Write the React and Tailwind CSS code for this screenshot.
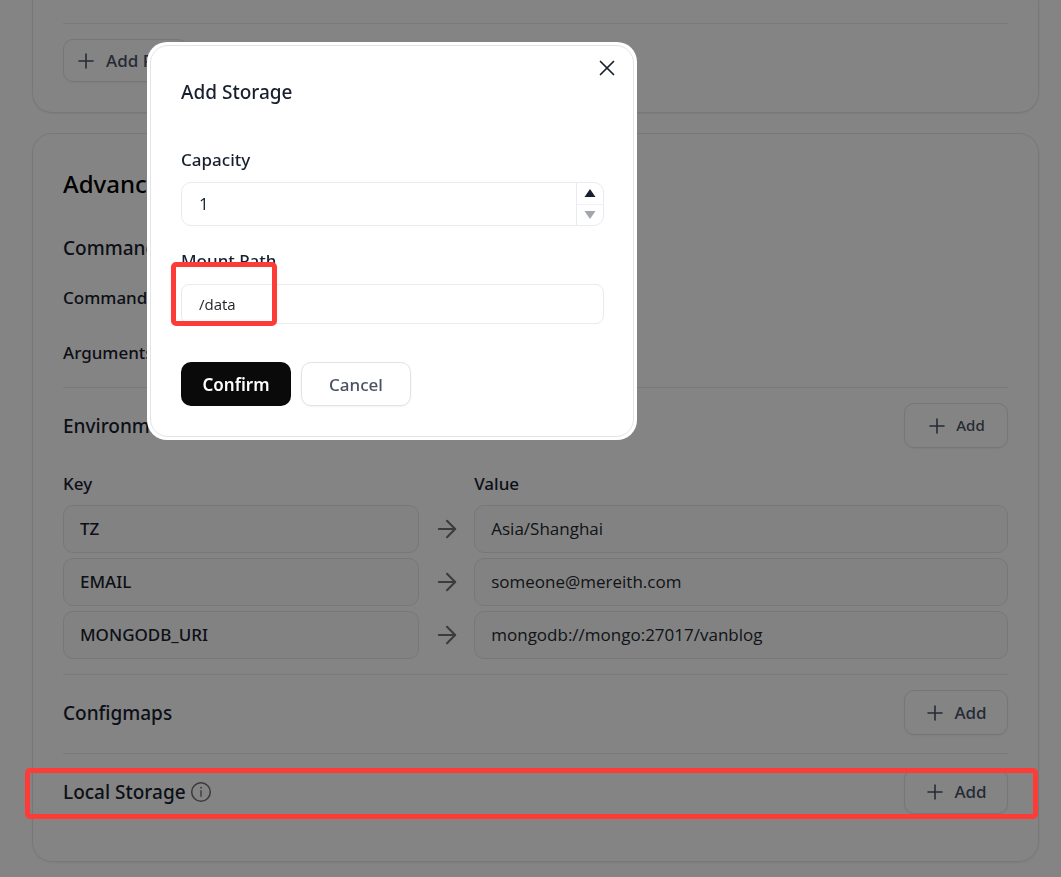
import React, { useState } from 'react';
import { ArrowRight, Plus, X } from 'lucide-react';

const ENVS = [
    { key: 'TZ', value: 'Asia/Shanghai' },
    { key: 'EMAIL', value: 'someone@mereith.com' },
    { key: 'MONGODB_URI', value: 'mongodb://mongo:27017/vanblog' },
];

function InfoIcon() {
    return (
        <svg width="22" height="22" viewBox="0 0 22 22" fill="none" stroke="currentColor">
            <circle cx="11" cy="11" r="9.3" strokeWidth="1.5" />
            <path d="M11 9.2v6.6" strokeWidth="1.4" />
            <circle cx="11" cy="6.7" r="0.9" fill="currentColor" stroke="none" />
        </svg>
    );
}

function AddButton({ small }) {
    return (
        <button
            type="button"
            className="flex h-[45px] w-[104px] items-center justify-center gap-[7px] rounded-[10px] border border-[#dfe2ea] pr-[2px] font-medium text-[#485264] shadow-xs"
        >
            <Plus size={24} strokeWidth={1.6} />
            <span className={small ? 'text-[15px]' : 'text-[17px]'}>Add</span>
        </button>
    );
}

function SectionTitle({ children }) {
    return <h3 className="text-[19px] leading-7 font-medium text-[#18202f]">{children}</h3>;
}

function EnvTable() {
    return (
        <table className="mt-[22px] w-full table-fixed border-separate border-spacing-0 text-left text-[17px] text-[#24282c]">
            <thead>
                <tr className="text-[#18202f]">
                    <th className="w-[37.7%] pb-[7px] leading-7 font-medium">Key</th>
                    <th className="w-[55px]"></th>
                    <th className="pb-[7px] leading-7 font-medium">Value</th>
                </tr>
            </thead>
            <tbody>
                {ENVS.map((env) => (
                    <tr key={env.key}>
                        <td className="pb-[5px]">
                            <div className="flex h-12 items-center rounded-[10px] border border-[#e3e5e9] bg-[#fafafb] px-4 font-medium text-[#18202f]">
                                {env.key}
                            </div>
                        </td>
                        <td className="pb-[5px]">
                            <ArrowRight size={28} strokeWidth={1.75} className="mx-auto text-[#6f7175]" />
                        </td>
                        <td className="pb-[5px]">
                            <div className="flex h-12 items-center rounded-[10px] border border-[#e3e5e9] bg-[#fafafb] px-4 font-['Open_Sans',sans-serif]">
                                {env.value}
                            </div>
                        </td>
                    </tr>
                ))}
            </tbody>
        </table>
    );
}

function AddStorageDialog({ onClose }) {
    const [capacity, setCapacity] = useState(1);
    const [path, setPath] = useState('/data');

    return (
        <div role="dialog" aria-labelledby="storage-title" className="w-[490px] rounded-[20px] bg-white p-[3px]">
            <form
                onSubmit={(e) => e.preventDefault()}
                className="relative rounded-[18px] border border-[#e2e4e6] pt-8 pr-[29px] pb-[30px] pl-[30px] text-[#18202f]"
            >
                <button
                    type="button"
                    aria-label="Close"
                    onClick={onClose}
                    className="absolute top-[9px] right-[13px]"
                >
                    <X size={26} strokeWidth={1.6} />
                </button>
                <h2 id="storage-title" className="text-[19px] leading-7 font-medium">Add Storage</h2>

                <label htmlFor="capacity" className="mt-10 block text-[17px] leading-7 font-medium">
                    Capacity
                </label>
                <div className="mt-2 flex h-11 rounded-[10px] border border-[#e8ebf0]">
                    <input
                        id="capacity"
                        type="text"
                        inputMode="numeric"
                        value={capacity}
                        onChange={(e) => setCapacity(Number(e.target.value) || 1)}
                        className="min-w-0 flex-1 bg-transparent px-[17px] font-['Open_Sans',sans-serif] text-[17px] outline-none"
                    />
                    <div className="flex w-[27px] flex-col border-l border-[#e8ebf0]">
                        <button
                            type="button"
                            aria-label="Increase"
                            onClick={() => setCapacity(capacity + 1)}
                            className="flex flex-1 items-center justify-center border-b border-[#f0f1f4]"
                        >
                            <svg width="12" height="8" viewBox="0 0 12 8"><path d="M6 0L11.5 8H0.5z" fill="#18202f" /></svg>
                        </button>
                        <button
                            type="button"
                            aria-label="Decrease"
                            disabled={capacity <= 1}
                            onClick={() => setCapacity(capacity - 1)}
                            className="flex flex-1 items-center justify-center disabled:opacity-40"
                        >
                            <svg width="12" height="8" viewBox="0 0 12 8"><path d="M6 8L0.5 0h11z" fill="#18202f" /></svg>
                        </button>
                    </div>
                </div>

                <label htmlFor="path" className="mt-[21px] block text-[17px] leading-7 font-medium">
                    Mount Path
                </label>
                <div className="relative mt-[9px]">
                    <input
                        id="path"
                        type="text"
                        value={path}
                        onChange={(e) => setPath(e.target.value)}
                        className="h-10 w-full rounded-lg border border-[#e8ebf0] px-[17px] font-['Open_Sans',sans-serif] text-[15px] text-[#24282c] outline-none"
                    />
                    <div className="pointer-events-none absolute -top-[22px] -left-[10px] h-16 w-[106px] rounded-[5px] border-[5px] border-[#fe3b37]" />
                </div>

                <div className="mt-[38px] flex gap-[10px]">
                    <button type="submit" className="h-11 w-[110px] rounded-[10px] bg-[#0a0a0a] pt-[2px] text-[17px] font-semibold text-white">
                        Confirm
                    </button>
                    <button
                        type="button"
                        onClick={onClose}
                        className="h-11 w-[110px] rounded-[10px] border border-[#dfe2ea] pt-[2px] text-[17px] font-medium text-[#485264] shadow-xs"
                    >
                        Cancel
                    </button>
                </div>
            </form>
        </div>
    );
}

export function App() {
    const [open, setOpen] = useState(true);

    return (
        <div className="min-h-screen bg-[#fdfdfd] pr-[22px] pl-8 font-['Noto_Sans','Open_Sans',sans-serif]">
            <section className="rounded-b-[20px] border border-t-0 border-[#e4e5e7] px-[30px] pt-[23px] pb-[30px] shadow-xs">
                <div className="border-t border-[#e8eaed] pt-[15px]">
                    <button
                        type="button"
                        className="flex h-[43px] items-center gap-2 rounded-[10px] border border-[#dfe2ea] px-[10px] text-[17px] font-medium text-[#485264] shadow-xs"
                    >
                        <Plus size={24} strokeWidth={1.6} />
                        Add Port
                    </button>
                </div>
            </section>

            <section className="mt-5 rounded-[20px] border border-[#e4e5e7] px-[30px] pt-[34px] pb-[47px] shadow-xs">
                <h2 className="text-2xl font-medium text-black">Advanced</h2>
                <div className="mt-[34px]">
                    <SectionTitle>Command</SectionTitle>
                    <div className="mt-[22px] text-[17px] leading-7 font-medium text-[#18202f]">Command</div>
                    <div className="mt-[27px] text-[17px] leading-7 font-medium text-[#18202f]">Arguments</div>
                </div>

                <div className="mt-5 border-t border-[#e8eaed] pt-[15px] pb-[10px]">
                    <div className="flex items-center justify-between">
                        <SectionTitle>Environment Variables</SectionTitle>
                        <AddButton small />
                    </div>
                    <EnvTable />
                </div>

                <div className="flex items-center justify-between border-t border-[#e8eaed] pt-[15px] pb-[18px]">
                    <SectionTitle>Configmaps</SectionTitle>
                    <AddButton />
                </div>

                <div className="border-t border-[#e8eaed] pt-[15px]">
                    <div className="relative flex items-center justify-between">
                        <div className="flex items-center gap-1">
                            <SectionTitle>Local Storage</SectionTitle>
                            <span className="text-[#6f7175]"><InfoIcon /></span>
                        </div>
                        <AddButton />
                        <div className="pointer-events-none absolute -top-px -right-[30px] -bottom-[5px] -left-[38px] z-20 rounded-[5px] border-[5px] border-[#fe3b37]" />
                    </div>
                </div>
            </section>

            {open && (
                <div className="fixed inset-0 z-10 flex items-start bg-black/48 pt-[42px] pl-[147px]">
                    <AddStorageDialog onClose={() => setOpen(false)} />
                </div>
            )}
        </div>
    );
}

export default App;
